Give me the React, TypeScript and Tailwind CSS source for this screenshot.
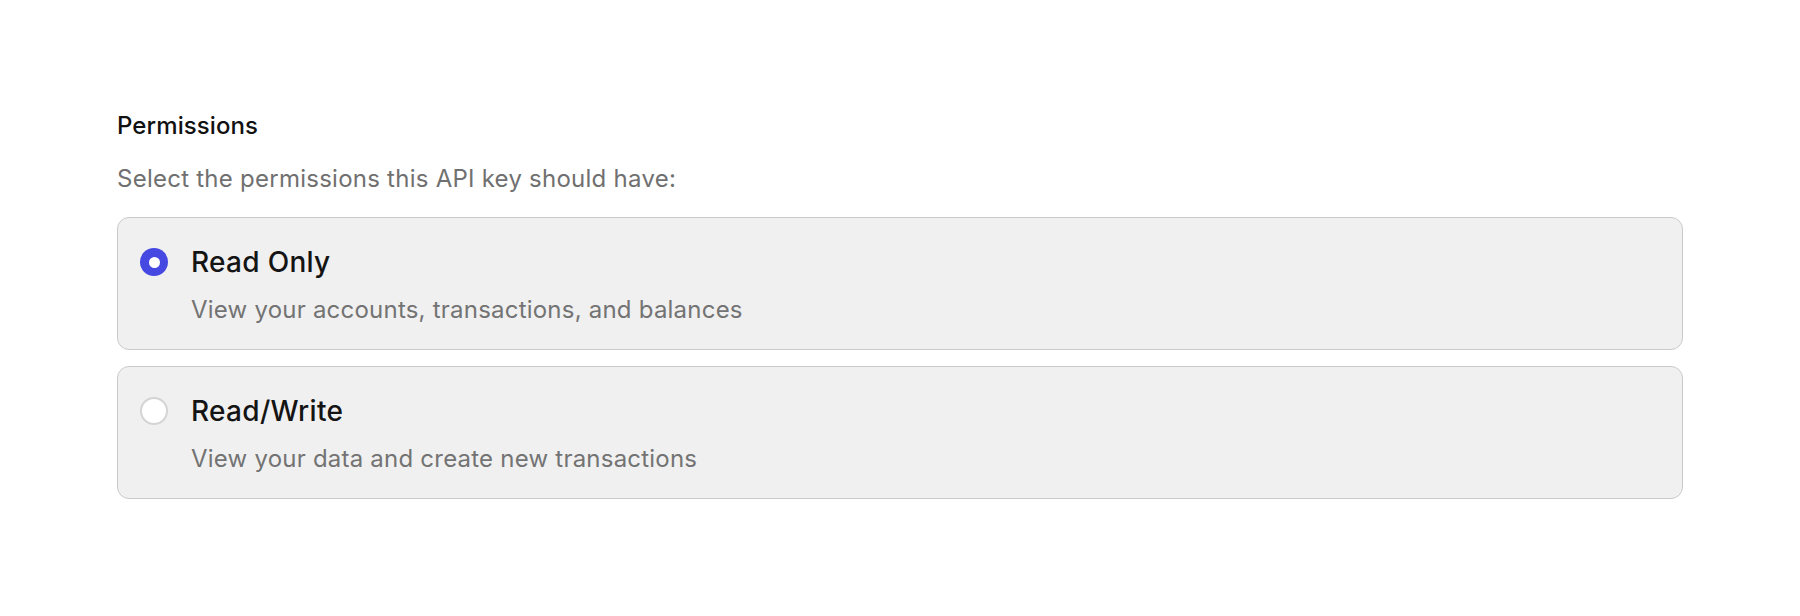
import { useState } from "react";

const options = [
  { id: "read", title: "Read Only", description: "View your accounts, transactions, and balances" },
  { id: "write", title: "Read/Write", description: "View your data and create new transactions" },
];

function Radio({ checked }: { checked: boolean }) {
  if (checked) {
    return (
      <span className="flex h-[28px] w-[28px] shrink-0 items-center justify-center rounded-full bg-[#4648e2]">
        <span className="h-[11px] w-[11px] rounded-full bg-white" />
      </span>
    );
  }
  return <span className="h-[28px] w-[28px] shrink-0 rounded-full border-2 border-[#d4d4d4] bg-white" />;
}

export default function App() {
  const [selected, setSelected] = useState("read");

  return (
    <div className="min-h-screen bg-white px-[117px] pt-[110px] font-['Inter','Liberation_Sans',sans-serif]">
      <h2 className="text-[24px] leading-[32px] font-medium tracking-[0.1px] text-[#111111]">Permissions</h2>
      <p className="mt-[21px] text-[24px] leading-[32px] tracking-[0.25px] text-[#707070]">
        Select the permissions this API key should have:
      </p>

      <div className="mt-[22px] flex flex-col gap-[16px]">
        {options.map((o) => (
          <button
            key={o.id}
            type="button"
            onClick={() => setSelected(o.id)}
            className="flex flex-col rounded-[12px] border-[1.5px] border-[#cacaca] bg-[#f0f0f0] pt-[26px] pb-[23px] pl-[22px] text-left"
          >
            <div className="flex items-center gap-[23px]">
              <Radio checked={selected === o.id} />
              <span className="text-[28px] leading-[36px] font-medium tracking-[0.3px] text-[#141414]">{o.title}</span>
            </div>
            <span className="mt-[14px] pl-[51px] text-[24px] leading-[32px] tracking-[0.22px] text-[#737373]">
              {o.description}
            </span>
          </button>
        ))}
      </div>
    </div>
  );
}
